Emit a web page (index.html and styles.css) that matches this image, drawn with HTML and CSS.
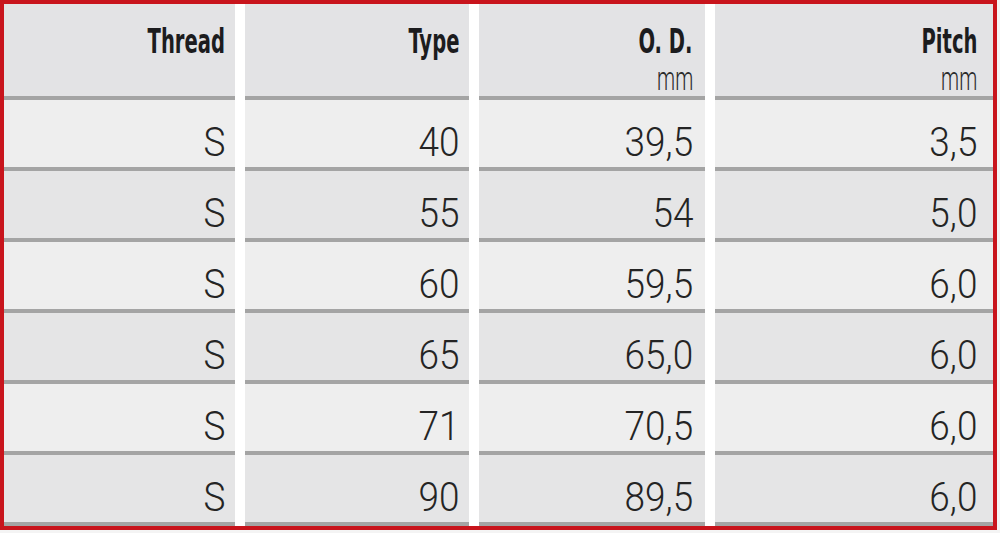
FILE: index.html
```html
<!DOCTYPE html>
<html lang="en">
<head>
<meta charset="utf-8">
<title>Thread table</title>
<link rel="stylesheet" href="styles.css">
</head>
<body>
<div class="frame">
  <div class="table">
    <div class="cell head"><span class="title">Thread</span></div>
    <div class="cell head"><span class="title">Type</span></div>
    <div class="cell head"><span class="title">O. D.</span><span class="unit">mm</span></div>
    <div class="cell head"><span class="title">Pitch</span><span class="unit">mm</span></div>

    <div class="cell light"><span class="num">S</span></div>
    <div class="cell light"><span class="num">40</span></div>
    <div class="cell light"><span class="num">39,5</span></div>
    <div class="cell light"><span class="num">3,5</span></div>

    <div class="cell dark"><span class="num">S</span></div>
    <div class="cell dark"><span class="num">55</span></div>
    <div class="cell dark"><span class="num">54</span></div>
    <div class="cell dark"><span class="num">5,0</span></div>

    <div class="cell light"><span class="num">S</span></div>
    <div class="cell light"><span class="num">60</span></div>
    <div class="cell light"><span class="num">59,5</span></div>
    <div class="cell light"><span class="num">6,0</span></div>

    <div class="cell dark"><span class="num">S</span></div>
    <div class="cell dark"><span class="num">65</span></div>
    <div class="cell dark"><span class="num">65,0</span></div>
    <div class="cell dark"><span class="num">6,0</span></div>

    <div class="cell light"><span class="num">S</span></div>
    <div class="cell light"><span class="num">71</span></div>
    <div class="cell light"><span class="num">70,5</span></div>
    <div class="cell light"><span class="num">6,0</span></div>

    <div class="cell dark"><span class="num">S</span></div>
    <div class="cell dark"><span class="num">90</span></div>
    <div class="cell dark"><span class="num">89,5</span></div>
    <div class="cell dark"><span class="num">6,0</span></div>
  </div>
</div>
</body>
</html>
```

FILE: styles.css
```css
html, body {
  margin: 0;
  padding: 0;
  background: #f4f4f4;
}

body {
  width: 1000px;
  height: 533px;
  overflow: hidden;
}

.frame {
  width: 997px;
  height: 530px;
  box-sizing: border-box;
  border: 4px solid #c8141c;
  background: #ffffff;
}

.table {
  display: grid;
  grid-template-columns: 231px 224px 226px 278px;
  grid-template-rows: 96px repeat(6, 71px);
  column-gap: 10px;
  background: #ffffff;
}

.cell {
  box-sizing: border-box;
  border-bottom: 4px solid #a4a4a4;
  display: flex;
  flex-direction: column;
  align-items: flex-end;
  color: #222222;
}

.head {
  background: #e3e3e5;
  padding: 20px 10px 0 0;
}

.light {
  background: #eeeeee;
  justify-content: flex-end;
  padding: 0 10px 4px 0;
}

.dark {
  background: #e5e5e6;
  justify-content: flex-end;
  padding: 0 10px 4px 0;
}

.table .cell:nth-child(4n) {
  padding-right: 16px;
}

.table .cell:nth-child(4n+3) {
  padding-right: 12px;
}

.title {
  display: inline-block;
  font-family: "Liberation Sans Narrow", "DejaVu Sans Condensed", "Liberation Sans", sans-serif;
  font-weight: bold;
  font-size: 34px;
  line-height: 34px;
  color: #1c1c1e;
  transform: scaleX(0.64);
  transform-origin: right center;
}

.unit {
  display: inline-block;
  font-family: Roboto, "Liberation Sans", sans-serif;
  font-weight: 300;
  font-size: 34px;
  line-height: 34px;
  margin-top: 3px;
  color: #2a2a2a;
  transform: scaleX(0.6);
  transform-origin: right center;
}

.num {
  display: inline-block;
  font-family: Roboto, "Liberation Sans", sans-serif;
  font-weight: 300;
  font-size: 41px;
  line-height: 41px;
  color: #242424;
  transform: scaleX(0.9);
  transform-origin: right center;
}
```
